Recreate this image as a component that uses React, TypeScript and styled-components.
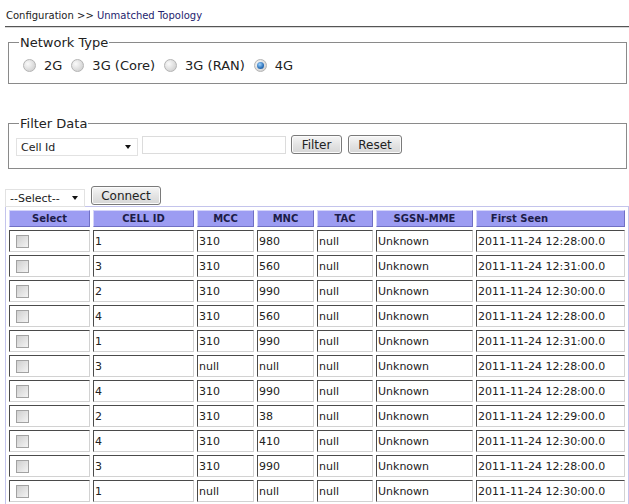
import React from "react";
import styled, { createGlobalStyle } from "styled-components";

const Global = createGlobalStyle`
  html, body { margin: 0; padding: 0; background: #fff; }
  body { font-family: "DejaVu Sans", Verdana, sans-serif; color: #222; overflow: hidden; }
`;

const Page = styled.div`
  padding: 10px 0 0 5px;
  width: 624px;
`;

const Breadcrumb = styled.div`
  font-size: 10px;
  line-height: 12px;
  padding-left: 1px;
  color: #222;
  padding-bottom: 4px;
  border-bottom: 1px solid #555;
  box-shadow: 0 1px 0 #d8d8d8;
`;

const Crumb = styled.span<{ $current?: boolean }>`
  color: ${(p) => (p.$current ? "#24246e" : "#222")};
`;

const Fieldset = styled.fieldset<{ $mt: number; $h: number }>`
  margin: ${(p) => p.$mt}px 2px 0 3px;
  padding: 0 0 0 10px;
  height: ${(p) => p.$h}px;
  box-sizing: border-box;
  border: 1px solid #8a8a8a;
  min-width: 0;
`;

const Legend = styled.legend`
  font-size: 13px;
  padding: 0 1px;
  color: #222;
  line-height: 15px;
`;

const RadioRow = styled.div`
  display: flex;
  align-items: center;
  margin-top: 8px;
  margin-left: 4px;
  font-size: 13px;
`;

const RadioLabel = styled.label`
  display: flex;
  align-items: center;
  margin-right: 9px;
  color: #222;
`;

const Radio = styled.input`
  appearance: none;
  width: 13px;
  height: 13px;
  margin: 0 8px 0 0;
  border-radius: 50%;
  border: 1px solid #b4b4b4;
  background: radial-gradient(circle at 35% 35%, #fafafa 0%, #dedede 55%, #c8c8c8 100%);
  box-sizing: border-box;
  position: relative;
  &:checked::after {
    content: "";
    position: absolute;
    left: 2px;
    top: 2px;
    width: 7px;
    height: 7px;
    border-radius: 50%;
    background: radial-gradient(circle at 40% 35%, #9fd4ff 0%, #2a6fb8 60%, #174f8d 100%);
  }
`;

const FilterRow = styled.div`
  display: flex;
  align-items: center;
  margin-top: 4px;
  margin-left: -3px;
`;

const SelectWrap = styled.span<{ $w: number }>`
  position: relative;
  display: inline-block;
  width: ${(p) => p.$w}px;
  height: 18px;
  &::after {
    content: "";
    position: absolute;
    right: 7px;
    top: 9px;
    border-left: 3px solid transparent;
    border-right: 3px solid transparent;
    border-top: 4px solid #111;
    pointer-events: none;
  }
`;

const Select = styled.select`
  appearance: none;
  width: 100%;
  height: 100%;
  border: 1px solid #e2e2e2;
  background: #fff;
  font-family: "DejaVu Sans", Verdana, sans-serif;
  font-size: 11px;
  color: #222;
  padding: 0 0 0 4px;
  margin: 0;
  outline: none;
`;

const TextInput = styled.input`
  width: 144px;
  height: 18px;
  box-sizing: border-box;
  border: 1px solid #dcdcdc;
  margin: 0 0 0 4px;
  padding: 0;
`;

const Button = styled.button<{ $w: number; $ml: number }>`
  width: ${(p) => p.$w}px;
  height: 19px;
  margin-left: ${(p) => p.$ml}px;
  padding: 0;
  border: 1px solid #7a7a7a;
  border-radius: 3px;
  background: linear-gradient(#f6f6f6, #e4e4e4 50%, #d6d6d6);
  font-family: "DejaVu Sans", Verdana, sans-serif;
  font-size: 12px;
  color: #222;
  box-shadow: inset 0 0 0 1px #fbfbfb;
`;

const ActionRow = styled.div`
  display: flex;
  align-items: center;
  margin-top: 17px;
`;

const Table = styled.table`
  margin-top: 1px;
  width: 624px;
  table-layout: fixed;
  border: 1px solid #c4c4ec;
  border-spacing: 3px;
  font-size: 11px;
`;

const Th = styled.th<{ $w?: number; $pr?: number }>`
  ${(p) => (p.$w ? `width: ${p.$w}px;` : "")}
  height: 15px;
  padding: 0 ${(p) => p.$pr ?? 0}px 0 0;
  background: #9c9cf2;
  color: #1c1c48;
  font-size: 10px;
  font-weight: bold;
  text-align: center;
  border-top: 1px solid #d4d4fa;
  border-left: 1px solid #d4d4fa;
  border-bottom: 1px solid #7070c4;
  border-right: 1px solid #7070c4;
  line-height: 13px;
`;

const Td = styled.td`
  height: 20px;
  padding: 0 0 0 1px;
  border-top: 1px solid #4a4a4a;
  border-left: 1px solid #4a4a4a;
  border-bottom: 1px solid #d2d2d2;
  border-right: 1px solid #d2d2d2;
  color: #222;
  white-space: nowrap;
  overflow: hidden;
`;

const Check = styled.input`
  appearance: none;
  display: block;
  width: 13px;
  height: 13px;
  margin: 0 0 0 5px;
  border: 1px solid #a2a2a2;
  background: linear-gradient(135deg, #cfcfcf, #f4f4f4);
  box-sizing: border-box;
`;

const cols: { label: string; w?: number; pr?: number }[] = [
  { label: "Select", w: 79 },
  { label: "CELL ID", w: 99 },
  { label: "MCC", w: 55 },
  { label: "MNC", w: 55 },
  { label: "TAC", w: 54 },
  { label: "SGSN-MME", w: 95 },
  { label: "First Seen", pr: 62 },
];

const rows = [
  ["1", "310", "980", "null", "Unknown", "2011-11-24 12:28:00.0"],
  ["3", "310", "560", "null", "Unknown", "2011-11-24 12:31:00.0"],
  ["2", "310", "990", "null", "Unknown", "2011-11-24 12:30:00.0"],
  ["4", "310", "560", "null", "Unknown", "2011-11-24 12:28:00.0"],
  ["1", "310", "990", "null", "Unknown", "2011-11-24 12:31:00.0"],
  ["3", "null", "null", "null", "Unknown", "2011-11-24 12:28:00.0"],
  ["4", "310", "990", "null", "Unknown", "2011-11-24 12:28:00.0"],
  ["2", "310", "38", "null", "Unknown", "2011-11-24 12:29:00.0"],
  ["4", "310", "410", "null", "Unknown", "2011-11-24 12:30:00.0"],
  ["3", "310", "990", "null", "Unknown", "2011-11-24 12:28:00.0"],
  ["1", "null", "null", "null", "Unknown", "2011-11-24 12:30:00.0"],
];

export default function App() {
  return (
    <>
      <Global />
      <Page>
        <Breadcrumb>
          <Crumb>Configuration &gt;&gt; </Crumb>
          <Crumb $current>Unmatched Topology</Crumb>
        </Breadcrumb>

        <Fieldset $mt={8} $h={49}>
          <Legend>Network Type</Legend>
          <RadioRow>
            <RadioLabel><Radio type="radio" name="nt" />2G</RadioLabel>
            <RadioLabel><Radio type="radio" name="nt" />3G (Core)</RadioLabel>
            <RadioLabel><Radio type="radio" name="nt" />3G (RAN)</RadioLabel>
            <RadioLabel><Radio type="radio" name="nt" defaultChecked />4G</RadioLabel>
          </RadioRow>
        </Fieldset>

        <Fieldset $mt={32} $h={53}>
          <Legend>Filter Data</Legend>
          <FilterRow>
            <SelectWrap $w={122}>
              <Select defaultValue="cell">
                <option value="cell">Cell Id</option>
              </Select>
            </SelectWrap>
            <TextInput type="text" />
            <Button $w={51} $ml={5}>Filter</Button>
            <Button $w={54} $ml={6}>Reset</Button>
          </FilterRow>
        </Fieldset>

        <ActionRow>
          <SelectWrap $w={80}>
            <Select defaultValue="s">
              <option value="s">--Select--</option>
            </Select>
          </SelectWrap>
          <Button $w={70} $ml={6}>Connect</Button>
        </ActionRow>

        <Table>
          <thead>
            <tr>
              {cols.map((c) => (
                <Th key={c.label} $w={c.w} $pr={c.pr}>{c.label}</Th>
              ))}
            </tr>
          </thead>
          <tbody>
            {rows.map((r, i) => (
              <tr key={i}>
                <Td><Check type="checkbox" /></Td>
                {r.map((v, j) => (
                  <Td key={j}>{v}</Td>
                ))}
              </tr>
            ))}
          </tbody>
        </Table>
      </Page>
    </>
  );
}
